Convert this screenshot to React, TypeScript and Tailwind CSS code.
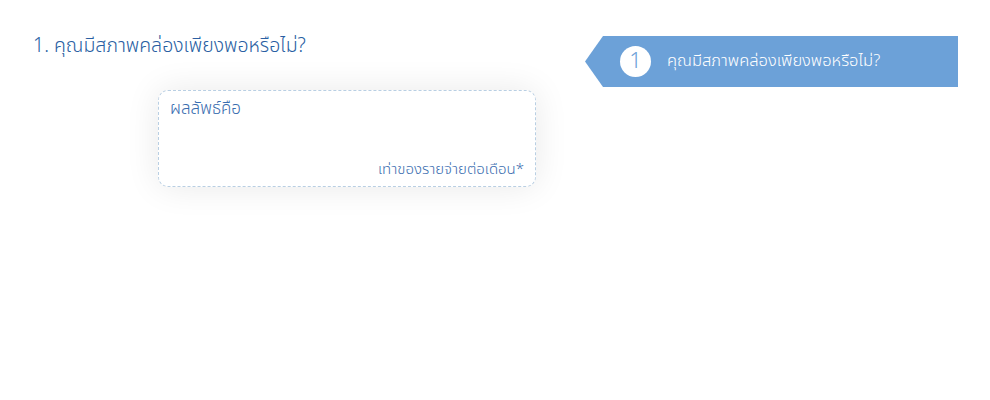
export default function App() {
    return (
        <div className="w-[990px] h-[400px] bg-white flex font-['Noto_Sans_Thai','Noto_Sans','DejaVu_Sans',sans-serif]">
            <div className="w-[585px] pl-[33px] pt-[33px]">
                <h1 className="text-[19.5px] leading-[26px] font-light text-[#2a5fa3]">
                    1. คุณมีสภาพคล่องเพียงพอหรือไม่?
                </h1>
                <div className="ml-[125px] mt-[31px] w-[378px] h-[97px] rounded-[10px] border border-dashed border-[#b9cfe3] bg-white shadow-[0_0_34px_rgba(0,0,0,0.09)] px-[11px] pt-[6px] pb-[6px] flex flex-col justify-between">
                    <p className="text-[17px] leading-[24px] font-light text-[#3a6daf]">ผลลัพธ์คือ</p>
                    <p className="text-[15px] leading-[20px] font-light text-[#3a6daf] text-right">
                        เท่าของรายจ่ายต่อเดือน*
                    </p>
                </div>
            </div>
            <div className="pt-[36px]">
                <div className="w-[373px] h-[51px] bg-[#6ca1d8] [clip-path:polygon(18px_0,100%_0,100%_100%,18px_100%,0_50%)] flex items-center pl-[35px]">
                    <div className="w-[31px] h-[31px] rounded-full bg-white flex items-center justify-center text-[22px] font-light text-[#6ca1d8] leading-none">
                        1
                    </div>
                    <span className="ml-[16px] text-[16.5px] font-light text-white">คุณมีสภาพคล่องเพียงพอหรือไม่?</span>
                </div>
            </div>
        </div>
    );
}
